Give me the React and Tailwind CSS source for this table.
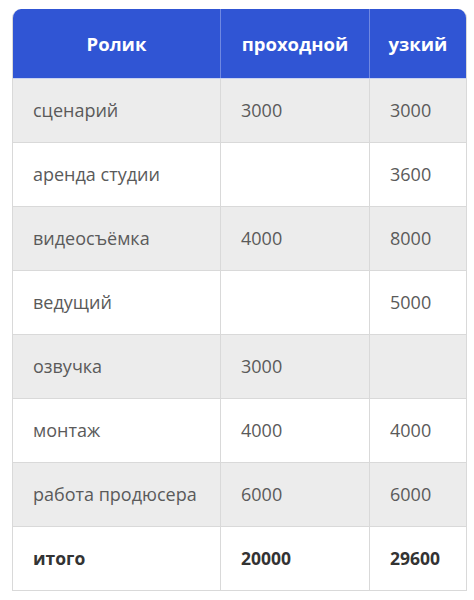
const rows = [
  { name: 'сценарий', a: '3000', b: '3000' },
  { name: 'аренда студии', a: '', b: '3600' },
  { name: 'видеосъёмка', a: '4000', b: '8000' },
  { name: 'ведущий', a: '', b: '5000' },
  { name: 'озвучка', a: '3000', b: '' },
  { name: 'монтаж', a: '4000', b: '4000' },
  { name: 'работа продюсера', a: '6000', b: '6000' },
];

export default function App() {
  return (
    <div className="bg-white w-[474px] h-[600px] pt-[9px] pl-[12px] font-['Open_Sans',sans-serif]">
      <div className="w-[455px] rounded-t-[9px] overflow-hidden border-x border-b border-[#d9d9d9]">
        <div className="grid grid-cols-[208px_149px_1fr] h-[70px] bg-[#3055d4] text-white font-bold text-[18.5px] border-b border-[#c9d2f0]">
          <div className="flex items-center justify-center border-r border-[#6f88e2]">Ролик</div>
          <div className="flex items-center justify-center border-r border-[#6f88e2]">проходной</div>
          <div className="flex items-center justify-center">узкий</div>
        </div>
        {rows.map((r, i) => (
          <div
            key={r.name}
            className={`grid grid-cols-[208px_149px_1fr] h-[64px] text-[18px] text-[#5a5a5a] border-b border-[#d9d9d9] ${i % 2 === 0 ? 'bg-[#ececec]' : 'bg-white'}`}
          >
            <div className="flex items-center px-5 border-r border-[#d9d9d9]">{r.name}</div>
            <div className="flex items-center px-5 border-r border-[#d9d9d9]">{r.a}</div>
            <div className="flex items-center px-5">{r.b}</div>
          </div>
        ))}
        <div className="grid grid-cols-[208px_149px_1fr] h-[63px] text-[17.5px] font-bold text-[#333333] bg-white">
          <div className="flex items-center px-5 border-r border-[#d9d9d9]">итого</div>
          <div className="flex items-center px-5 border-r border-[#d9d9d9]">20000</div>
          <div className="flex items-center px-5">29600</div>
        </div>
      </div>
    </div>
  );
}
